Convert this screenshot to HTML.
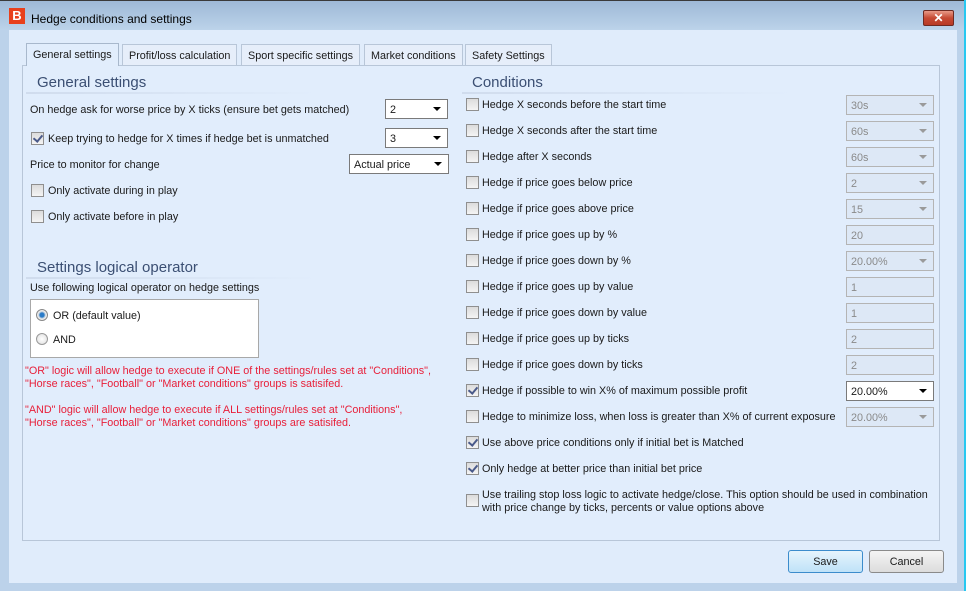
<!DOCTYPE html>
<html><head><meta charset="utf-8"><style>
*{box-sizing:border-box;margin:0;padding:0}
body{width:966px;height:591px;overflow:hidden;background:#bcd2ea;font-family:"Liberation Sans",sans-serif;font-size:10.8px;color:#1a1a1a;position:relative}
.a{position:absolute;white-space:nowrap}
.t{position:absolute;white-space:nowrap;line-height:13px;margin-top:1px}
.cb{position:absolute;width:13px;height:13px;border:1px solid #8f8f8f;background:linear-gradient(#dcdcdc,#f4f4f4)}
.cb.on::after{content:"";position:absolute;left:3px;top:0px;width:4px;height:7px;border:solid #4a5a8a;border-width:0 2px 2px 0;transform:rotate(40deg)}
.cmb{position:absolute;height:20px;border:1px solid #7a7a7a;background:#fff;padding:4px 4px 2px;line-height:12px}
.cmb.dis{border-color:#b4b4b4;background:#dde8f6;color:#8a8a8a}
.cmb .ar{position:absolute;right:6px;top:7px;width:0;height:0;border-left:4px solid transparent;border-right:4px solid transparent;border-top:4px solid #000}
.cmb.dis .ar{border-top-color:#9a9a9a}
.hd{position:absolute;font-size:15px;color:#3b4f73}
.ul{position:absolute;height:2px;background:linear-gradient(90deg,#d0dced,rgba(225,237,252,0))}
.red{color:#e8203a}
.tab{position:absolute;top:44px;height:21px;border:1px solid #b8c6d8;border-bottom:none;background:#e6eefa;padding:5px 6px 0;line-height:12px}
</style></head><body>
<div class="a" style="left:0;top:0;width:966px;height:30px;background:linear-gradient(#9db8d6,#bcd3ea)"></div>
<div class="a" style="left:0;top:0;width:966px;height:1px;background:#3a3a3a"></div>
<div class="a" style="left:964px;top:0;width:2px;height:591px;background:#28c8f0"></div>
<div class="a" style="left:9px;top:8px;width:16px;height:16px;background:#e8401c;color:#fff;font-weight:bold;font-size:13px;line-height:16px;text-align:center">B</div>
<div class="t" style="left:31px;top:12px;font-size:12px;color:#000">Hedge conditions and settings</div>
<div class="a" style="left:923px;top:10px;width:31px;height:16px;border:1px solid #6e2a22;border-radius:2px;background:linear-gradient(#e99a88,#c64a34 50%,#b83a26);color:#fff;font-weight:bold;font-size:12px;line-height:14px;text-align:center">✕</div>
<div class="a" style="left:9px;top:30px;width:948px;height:553px;background:#e0ecfb"></div>
<div class="a" style="left:22px;top:65px;width:918px;height:476px;border:1px solid #b8c6d8;background:#e1edfc"></div>
<div class="tab" style="left:26px;top:43px;height:23px;background:#e1edfc;border-color:#a8b8cc">General settings</div>
<div class="tab" style="left:122px">Profit/loss calculation</div>
<div class="tab" style="left:241px">Sport specific settings</div>
<div class="tab" style="left:364px">Market conditions</div>
<div class="tab" style="left:465px">Safety Settings</div>

<div class="hd" style="left:37px;top:74px">General settings</div>
<div class="ul" style="left:26px;top:92px;width:290px"></div>
<div class="t" style="left:30px;top:103px">On hedge ask for worse price by X ticks (ensure bet gets matched)</div>
<div class="cmb" style="left:385px;top:99px;width:63px">2<span class="ar"></span></div>
<div class="cb on" style="left:31px;top:132px"></div>
<div class="t" style="left:48px;top:132px">Keep trying to hedge for X times if hedge bet is unmatched</div>
<div class="cmb" style="left:385px;top:128px;width:63px">3<span class="ar"></span></div>
<div class="t" style="left:30px;top:158px">Price to monitor for change</div>
<div class="cmb" style="left:349px;top:154px;width:100px">Actual price<span class="ar"></span></div>
<div class="cb" style="left:31px;top:184px"></div>
<div class="t" style="left:48px;top:184px">Only activate during in play</div>
<div class="cb" style="left:31px;top:210px"></div>
<div class="t" style="left:48px;top:210px">Only activate before in play</div>

<div class="hd" style="left:37px;top:259px">Settings logical operator</div>
<div class="ul" style="left:26px;top:277px;width:290px"></div>
<div class="t" style="left:30px;top:281px">Use following logical operator on hedge settings</div>
<div class="a" style="left:30px;top:299px;width:229px;height:59px;background:#fff;border:1px solid #a8a8a8"></div>
<div class="a" style="left:36px;top:309px;width:12px;height:12px;border-radius:50%;border:1px solid #888;background:radial-gradient(#2a7bc8 30%,#bcd 45%,#eee 60%)"></div>
<div class="t" style="left:53px;top:309px">OR (default value)</div>
<div class="a" style="left:36px;top:333px;width:12px;height:12px;border-radius:50%;border:1px solid #999;background:radial-gradient(#fff,#ddd)"></div>
<div class="t" style="left:53px;top:333px">AND</div>
<div class="t red" style="left:25px;top:364px">"OR" logic will allow hedge to execute if ONE of the settings/rules set at "Conditions",</div>
<div class="t red" style="left:25px;top:377px">"Horse races", "Football" or "Market conditions" groups is satisifed.</div>
<div class="t red" style="left:25px;top:403px">"AND" logic will allow hedge to execute if ALL settings/rules set at "Conditions",</div>
<div class="t red" style="left:25px;top:416px">"Horse races", "Football" or "Market conditions" groups are satisifed.</div>

<div class="hd" style="left:472px;top:74px">Conditions</div>
<div class="ul" style="left:462px;top:92px;width:330px"></div>

<div class="cb" style="left:466px;top:98px"></div><div class="t" style="left:482px;top:98px">Hedge X seconds before the start time</div><div class="cmb dis" style="left:846px;top:95px;width:88px">30s<span class="ar"></span></div>
<div class="cb" style="left:466px;top:124px"></div><div class="t" style="left:482px;top:124px">Hedge X seconds after the start time</div><div class="cmb dis" style="left:846px;top:121px;width:88px">60s<span class="ar"></span></div>
<div class="cb" style="left:466px;top:150px"></div><div class="t" style="left:482px;top:150px">Hedge after X seconds</div><div class="cmb dis" style="left:846px;top:147px;width:88px">60s<span class="ar"></span></div>
<div class="cb" style="left:466px;top:176px"></div><div class="t" style="left:482px;top:176px">Hedge if price goes below price</div><div class="cmb dis" style="left:846px;top:173px;width:88px">2<span class="ar"></span></div>
<div class="cb" style="left:466px;top:202px"></div><div class="t" style="left:482px;top:202px">Hedge if price goes above price</div><div class="cmb dis" style="left:846px;top:199px;width:88px">15<span class="ar"></span></div>
<div class="cb" style="left:466px;top:228px"></div><div class="t" style="left:482px;top:228px">Hedge if price goes up by %</div><div class="cmb dis" style="left:846px;top:225px;width:88px">20</div>
<div class="cb" style="left:466px;top:254px"></div><div class="t" style="left:482px;top:254px">Hedge if price goes down by %</div><div class="cmb dis" style="left:846px;top:251px;width:88px">20.00%<span class="ar"></span></div>
<div class="cb" style="left:466px;top:280px"></div><div class="t" style="left:482px;top:280px">Hedge if price goes up by value</div><div class="cmb dis" style="left:846px;top:277px;width:88px">1</div>
<div class="cb" style="left:466px;top:306px"></div><div class="t" style="left:482px;top:306px">Hedge if price goes down by value</div><div class="cmb dis" style="left:846px;top:303px;width:88px">1</div>
<div class="cb" style="left:466px;top:332px"></div><div class="t" style="left:482px;top:332px">Hedge if price goes up by ticks</div><div class="cmb dis" style="left:846px;top:329px;width:88px">2</div>
<div class="cb" style="left:466px;top:358px"></div><div class="t" style="left:482px;top:358px">Hedge if price goes down by ticks</div><div class="cmb dis" style="left:846px;top:355px;width:88px">2</div>
<div class="cb on" style="left:466px;top:384px"></div><div class="t" style="left:482px;top:384px">Hedge if possible to win X% of maximum possible profit</div><div class="cmb" style="left:846px;top:381px;width:88px">20.00%<span class="ar"></span></div>
<div class="cb" style="left:466px;top:410px"></div><div class="t" style="left:482px;top:410px">Hedge to minimize loss, when loss is greater than X% of current exposure</div><div class="cmb dis" style="left:846px;top:407px;width:88px">20.00%<span class="ar"></span></div>
<div class="cb on" style="left:466px;top:436px"></div><div class="t" style="left:482px;top:436px">Use above price conditions only if initial bet is Matched</div>
<div class="cb on" style="left:466px;top:462px"></div><div class="t" style="left:482px;top:462px">Only hedge at better price than initial bet price</div>
<div class="cb" style="left:466px;top:494px"></div><div class="t" style="left:482px;top:488px">Use trailing stop loss logic to activate hedge/close. This option should be used in combination</div>
<div class="t" style="left:482px;top:501px">with price change by ticks, percents or value options above</div>

<div class="a" style="left:788px;top:550px;width:75px;height:23px;border:1px solid #3c8ccc;border-radius:3px;background:linear-gradient(#e6f4fc,#bfe2f8);text-align:center;line-height:23px">Save</div>
<div class="a" style="left:869px;top:550px;width:75px;height:23px;border:1px solid #8a8a8a;border-radius:3px;background:linear-gradient(#f4f4f4,#dcdcdc);text-align:center;line-height:23px">Cancel</div>
</body></html>
